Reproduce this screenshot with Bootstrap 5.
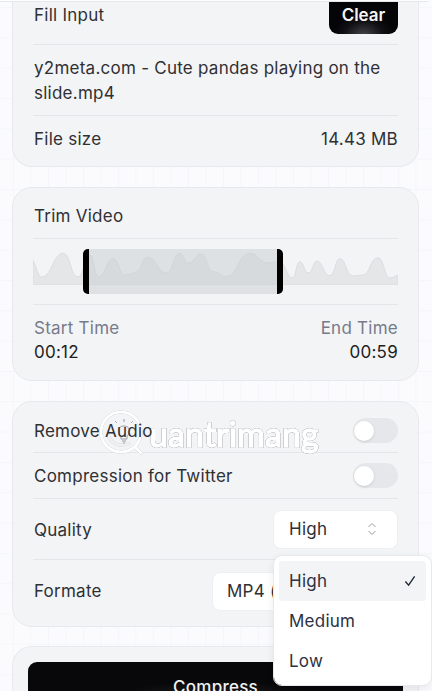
<!DOCTYPE html>
<html lang="en">
<head>
<meta charset="utf-8">
<title>Compress video</title>
<link href="https://cdn.jsdelivr.net/npm/bootstrap@5.3.0/dist/css/bootstrap.min.css" rel="stylesheet">
<style>
html,body{height:691px;overflow:hidden}
body{font-family:Inter,"Liberation Sans",sans-serif;font-size:17px;letter-spacing:.25px;line-height:25px;color:#2f3034;background-color:#fbfbfd;background-image:linear-gradient(#f5f6f9 1px,transparent 1px),linear-gradient(90deg,#f5f6f9 1px,transparent 1px);background-size:17.5px 30.33px;background-position:13px 7px;position:relative}
.top-strip{height:2px;margin-right:3px;background:#fff;border-bottom:1px solid #e6e7eb;border-bottom-right-radius:6px}
.panel{margin:0 13px 20px 12px;padding:0 20px 0 21px;background:#f3f4f6;border:1px solid #e8e9ed;border-radius:20px}
.panel-first{border-top:0;border-top-left-radius:0;border-top-right-radius:0}
.rowline{border-bottom:1px solid #e5e6ea;margin:0 0 0 -1px;padding-left:1px}
.rowline-last{border-bottom:0}
.txt-nudge{padding-top:2px;position:relative;z-index:2}
.clear-btn{--bs-btn-padding-x:0;--bs-btn-padding-y:0;--bs-btn-border-width:0;width:69px;height:32px;padding-bottom:5px;border-radius:0 0 9px 9px;color:#f4f4f5;font-weight:600;font-size:17px;letter-spacing:0;line-height:25px;background:radial-gradient(ellipse 30px 22px at 50% 105%,#45454b 0,#111114 65%,#050507 100%)}
.wave-box{height:66px;padding-top:10px;position:relative}
.wave-svg{display:block;width:365px;height:36px;margin-left:-1px}
.trim-sel{position:absolute;left:50px;top:10px;width:200px;height:45px;background:rgba(200,206,208,.5);border-left:6px solid #000;border-right:6px solid #000;border-radius:5px}
.muted-label{color:#767b8b;line-height:24px}
.time-val{color:#1d1e22}
.track{width:45px;height:25px;background:#e6e7ea;border-radius:13px;padding-left:1px}
.knob{width:20px;height:20px;background:#fff;border-radius:50%;box-shadow:0 1px 3px rgba(0,0,0,.12)}
.pick-btn{height:39px;background:#fff;border:1px solid #eeeff2;border-radius:8px;padding:0 20px 0 14px;color:#2f3034;font-size:17px;letter-spacing:.25px;flex:none}
.pick-q{width:125px;padding-left:15px}
.pick-f{width:186px}
.menu-pop{--bs-dropdown-min-width:0;--bs-dropdown-padding-y:5px;--bs-dropdown-padding-x:5px;--bs-dropdown-border-color:#e8e9ed;--bs-dropdown-border-radius:9px;--bs-dropdown-item-padding-x:10px;--bs-dropdown-item-padding-y:7px;--bs-dropdown-link-color:#2c3244;--bs-dropdown-font-size:17px;position:absolute;left:273px;top:555px;width:159px;height:131px;z-index:3;box-shadow:0 3px 8px rgba(0,0,0,.07)}
.menu-pop .dropdown-item{height:40px;line-height:26px;border-radius:3px}
.menu-pop .item-on{background:#f3f4f6}
.panel-end{height:45px;padding:15px 15px 0;margin-bottom:0;border-bottom:0;border-bottom-left-radius:0;border-bottom-right-radius:0;overflow:hidden}
.go-btn{--bs-btn-border-width:0;--bs-btn-padding-y:0;padding-top:3px;width:375px;height:48px;border-radius:9px;color:#f1f1f2;font-weight:500;font-size:17px;letter-spacing:.25px;background:radial-gradient(ellipse 120px 30px at 50% 100%,#46464c 0,#131316 70%,#08080a 100%)}
.mark-wm{position:absolute;left:99px;top:410px;width:225px;height:50px;pointer-events:none;z-index:1}
.mark-logo{position:absolute;left:0;top:0;filter:drop-shadow(0 0 .6px #a0a2a8)}
.mark-text{position:absolute;left:50px;top:-1px;font-family:Lato,"Liberation Sans",sans-serif;font-size:34px;line-height:50px;letter-spacing:.1px;color:#fff;-webkit-text-stroke:1.5px #fff;filter:drop-shadow(0 0 .6px #8f9198) drop-shadow(0 0 .5px #a5a7ad)}
</style>
</head>
<body>
<div class="top-strip"></div>

<section class="panel panel-first">
  <div class="rowline d-flex justify-content-between align-items-start" style="height:43px">
    <span style="line-height:26px">Fill Input</span>
    <button class="btn clear-btn" type="button">Clear</button>
  </div>
  <div class="rowline" style="padding-top:11px;padding-bottom:10px;height:71px">y2meta.com - Cute pandas playing on the slide.mp4</div>
  <div class="rowline rowline-last d-flex justify-content-between align-items-center" style="height:50px;padding-bottom:3px">
    <span>File size</span><span>14.43 MB</span>
  </div>
</section>

<section class="panel">
  <div class="rowline d-flex align-items-center" style="height:51px;padding-top:7px">Trim Video</div>
  <div class="rowline wave-box">
    <svg class="wave-svg" viewBox="0 0 365 36" aria-hidden="true"><path fill="#e5e6e8" stroke="#dcdde0" d="M0 11C4 20 5 28 8.7 28C19 28 20 4.3 30 4.3C38 4.3 37 28 45 28C51 28 51 6 57 6C61 6 61 27.7 65.5 27.7C73 27.7 73 9.7 80 9.7C86 9.7 86 26 92 26C97 26 99 24 103.6 22.7C109 21 109 8.3 114 8.3C124 8.3 124 24 134 24C140 24 140 4.3 147 4.3C151 4.3 151 14 155 14C162 14 162 5 168.7 5C174 5 174 22.7 180 22.7C187 22.7 187 27.7 193.7 27.7C205 27.7 205 4.3 217 4.3C226 4.3 226 14 235 14C240 14 240 12.7 246 12.7C253 12.7 253 29 259.7 29C263 29 263 12.7 267 12.7C271 12.7 271 24 275 24C280 24 280 12 284 12C290 12 290 26.7 297 26.7C302 26.7 302 9.7 307 9.7C313 9.7 313 27 320 27C325 27 325 26 330 26C337 26 337 8.7 345 8.7C351 8.7 351 29 357 29C360 29 362 27 365 26V36H0Z"/></svg>
    <div class="trim-sel"></div>
  </div>
  <div class="d-flex justify-content-between" style="padding-top:11px;height:75px">
    <div><div class="muted-label">Start Time</div><div class="time-val">00:12</div></div>
    <div class="text-end"><div class="muted-label">End Time</div><div class="time-val">00:59</div></div>
  </div>
</section>

<section class="panel" style="margin-bottom:19px">
  <div class="rowline d-flex justify-content-between align-items-center" style="height:51px;padding-top:7px">
    <span class="txt-nudge">Remove Audio</span><span class="track d-flex align-items-center"><span class="knob"></span></span>
  </div>
  <div class="rowline d-flex justify-content-between align-items-center" style="height:46px">
    <span class="txt-nudge">Compression for Twitter</span><span class="track d-flex align-items-center"><span class="knob"></span></span>
  </div>
  <div class="rowline d-flex justify-content-between align-items-center" style="height:61px">
    <span class="txt-nudge">Quality</span>
    <button class="pick-btn pick-q d-flex justify-content-between align-items-center" type="button"><span>High</span>
      <svg width="10" height="14" viewBox="0 0 10 14" fill="none" stroke="#9a9ca3" stroke-width="1" aria-hidden="true"><path d="M1.5 5 5 1.5 8.5 5M1.5 9 5 12.5 8.5 9"/></svg></button>
  </div>
  <div class="d-flex justify-content-between align-items-center" style="height:66px;padding-bottom:3px">
    <span>Formate</span>
    <button class="pick-btn pick-f d-flex justify-content-between align-items-center" type="button"><span>MP4 (.mp4)</span>
      <svg width="10" height="14" viewBox="0 0 10 14" fill="none" stroke="#9a9ca3" stroke-width="1" aria-hidden="true"><path d="M1.5 5 5 1.5 8.5 5M1.5 9 5 12.5 8.5 9"/></svg></button>
  </div>
</section>

<section class="panel panel-end">
  <button class="btn go-btn" type="button">Compress</button>
</section>

<div class="mark-wm" aria-hidden="true">
  <svg class="mark-logo" width="52" height="50" viewBox="0 0 52 50" fill="none">
    <circle cx="22" cy="22" r="20" stroke="#fff" stroke-width="3"/>
    <path d="M9 24C11 34 22 38 31 33" stroke="#fff" stroke-opacity=".8" stroke-width="3"/>
    <path d="M35 36 43 44" stroke="#fff" stroke-width="3"/>
    <path d="M21 25C18 22 19 16 25 16S32 22 29 25C28 26 28 27 28 29H22C22 27 22 26 21 25ZM23 31H27M24 33H26M25 9V12M16 11 18 13M34 11 32 13" stroke="#a8aab0" stroke-opacity=".7" stroke-width="1"/>
  </svg>
  <span class="mark-text">uantrimang</span>
</div>

<div class="dropdown-menu show menu-pop">
  <a class="dropdown-item item-on d-flex justify-content-between align-items-center" href="#"><span>High</span>
    <svg width="12" height="12" viewBox="0 0 13 12" fill="none" stroke="#1f2937" stroke-width="1.5" aria-hidden="true"><path d="M1.5 6.5 5 10.5 11.5 1"/></svg></a>
  <a class="dropdown-item" href="#">Medium</a>
  <a class="dropdown-item" href="#">Low</a>
</div>

<script src="https://cdn.jsdelivr.net/npm/bootstrap@5.3.0/dist/js/bootstrap.bundle.min.js"></script>
</body>
</html>
